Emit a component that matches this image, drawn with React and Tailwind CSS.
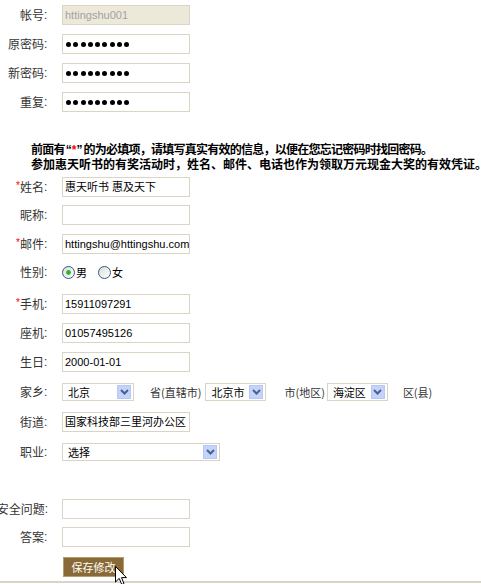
import React from "react";

const cjk = "font-['Noto_Sans_CJK_SC',sans-serif]";
const mix = "font-['Liberation_Sans','Noto_Sans_CJK_SC',sans-serif]";

function Label({ children, req }) {
  return (
    <div className={`w-[48px] shrink-0 flex justify-end items-center whitespace-nowrap text-[12px] leading-[14px] text-[#333] ${cjk}`}>
      {req && <span className="text-[#ff0000] text-[10px] leading-none self-start mt-[1px] font-['Liberation_Sans']">*</span>}
      <span>{children}</span>
      <span className="w-[4px] font-['Liberation_Sans'] text-[12px]">:</span>
    </div>
  );
}

function Box({ children, disabled, w = 128 }) {
  return (
    <div
      className={`h-[20px] border border-[#d9d4c4] px-[2px] flex items-center overflow-hidden whitespace-nowrap text-[11px] ${mix} ${
        disabled ? "bg-[#ece9d8] text-[#a3a3a3]" : "bg-white text-black"
      }`}
      style={{ width: w }}
    >
      {children}
    </div>
  );
}

function Dots() {
  return (
    <div className="flex gap-[2.3px] pl-[1px]">
      {Array.from({ length: 9 }).map((_, i) => (
        <span key={i} className="w-[5px] h-[5px] rounded-full bg-black" />
      ))}
    </div>
  );
}

function Chevron() {
  return (
    <svg width="9" height="6" viewBox="0 0 9 6">
      <path d="M1 1 L4.5 4.5 L8 1" fill="none" stroke="#4d6185" strokeWidth="2" />
    </svg>
  );
}

function Select({ w, text }) {
  return (
    <div
      className={`h-[18px] border border-[#d9d4c4] bg-white flex items-center justify-between pl-[5px] pr-[2px] text-[11px] ${cjk} text-black whitespace-nowrap`}
      style={{ width: w }}
    >
      <span>{text}</span>
      <span className="w-[14px] h-[14px] bg-[#c3d3fd] border border-[#b7c8f2] flex items-center justify-center">
        <Chevron />
      </span>
    </div>
  );
}

function Radio({ checked }) {
  return (
    <svg width="13" height="13" viewBox="0 0 13 13">
      <defs>
        <linearGradient id="rg" x1="0" y1="0" x2="1" y2="1">
          <stop offset="0" stopColor="#dcdcd5" />
          <stop offset="1" stopColor="#ffffff" />
        </linearGradient>
      </defs>
      <circle cx="6.5" cy="6.5" r="6" fill="url(#rg)" stroke="#2f5a8a" strokeWidth="1" />
      {checked && <circle cx="6.5" cy="6.5" r="2.4" fill="#2bb52b" />}
    </svg>
  );
}

function Row({ label, req, children, className = "" }) {
  return (
    <div className={`flex items-center h-[20px] gap-[14px] ${className}`}>
      <Label req={req}>{label}</Label>
      {children}
    </div>
  );
}

export default function App() {
  return (
    <div className="relative w-[481px] h-[584px] overflow-hidden bg-white">
      <div className="flex flex-col pt-[5px]">
        <Row label="帐号">
          <Box disabled>httingshu001</Box>
        </Row>
        <Row label="原密码" className="mt-[9px]">
          <Box><Dots /></Box>
        </Row>
        <Row label="新密码" className="mt-[9px]">
          <Box><Dots /></Box>
        </Row>
        <Row label="重复" className="mt-[9px]">
          <Box><Dots /></Box>
        </Row>

        <div className={`mt-[29px] ml-[31px] font-bold text-[12px] text-black whitespace-nowrap ${cjk}`}>
          <div className="h-[15px] leading-[15px]">
            <span className="tracking-[-0.75px]">前面有</span>
            <span className="font-['Liberation_Sans'] leading-none mx-[1px]">
              “<span className="text-[#ff0000]">*</span>”
            </span>
            <span className="tracking-[-0.75px]">的为必填项，请填写真实有效的信息，以便在您忘记密码时找回密码。</span>
          </div>
          <div className="h-[15px] leading-[15px]">参加惠天听书的有奖活动时，姓名、邮件、电话也作为领取万元现金大奖的有效凭证。</div>
        </div>

        <Row label="姓名" req className="mt-[6px]">
          <Box>惠天听书 惠及天下</Box>
        </Row>
        <Row label="昵称" className="mt-[8px]">
          <Box />
        </Row>
        <Row label="邮件" req className="mt-[9px]">
          <Box>httingshu@httingshu.com</Box>
        </Row>
        <Row label="性别" className="mt-[8px]">
          <div className={`flex items-center text-[11px] text-black ${cjk}`}>
            <Radio checked />
            <span className="ml-[1px]">男</span>
            <span className="ml-[11px] flex"><Radio /></span>
            <span className="ml-[1px]">女</span>
          </div>
        </Row>
        <Row label="手机" req className="mt-[12px]">
          <Box>15911097291</Box>
        </Row>
        <Row label="座机" className="mt-[9px]">
          <Box>01057495126</Box>
        </Row>
        <Row label="生日" className="mt-[9px]">
          <Box>2000-01-01</Box>
        </Row>
        <Row label="家乡" className="mt-[10px]">
          <div className={`flex items-center text-[11px] text-[#333] whitespace-nowrap ${cjk}`}>
            <Select w={72} text="北京" />
            <span className="ml-[16px]">省(直辖市)</span>
            <span className="ml-[4px]"><Select w={61} text="北京市" /></span>
            <span className="ml-[18px]">市(地区)</span>
            <span className="ml-[2px]"><Select w={61} text="海淀区" /></span>
            <span className="ml-[15px]">区(县)</span>
          </div>
        </Row>
        <Row label="街道" className="mt-[10px]">
          <Box>国家科技部三里河办公区</Box>
        </Row>
        <Row label="职业" className="mt-[10px]">
          <Select w={158} text="选择" />
        </Row>

        <Row label="安全问题" className="mt-[37px]">
          <Box />
        </Row>
        <Row label="答案" className="mt-[8px]">
          <Box />
        </Row>

        <div className="mt-[10px] ml-[63px]">
          <div className={`w-[61px] h-[20px] bg-[#896936] border border-[#b49c6e] text-white text-[11px] flex items-center justify-center ${cjk}`}>
            保存修改
          </div>
        </div>

        <div className="mt-[4px] h-[2px] bg-[#d8d4c7]" />
      </div>

      <svg className="absolute left-[115px] top-[566px]" width="13" height="20" viewBox="0 0 13 20">
        <path d="M0.5 0.5 L0.5 16 L4.2 12.4 L6.8 18.6 L9 17.6 L6.5 11.6 L11.5 11.6 Z" fill="#fff" stroke="#000" strokeWidth="1" />
      </svg>
    </div>
  );
}
